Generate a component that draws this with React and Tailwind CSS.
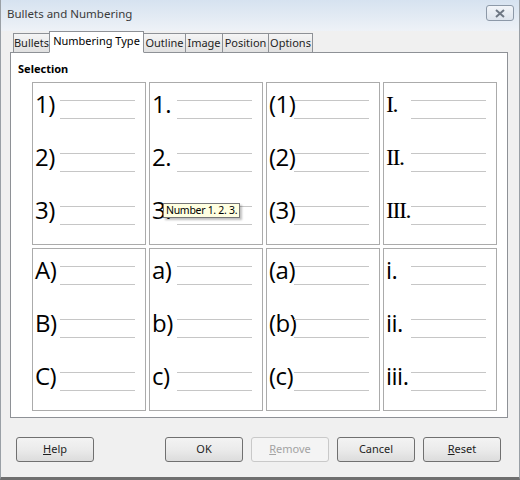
import React from 'react';

const ui = { fontFamily: '"Noto Sans", "Open Sans", Arial, sans-serif' };
const big = { fontFamily: '"Open Sans", "Noto Sans", Arial, sans-serif' };
const serif = { fontFamily: '"Liberation Serif", "DejaVu Serif", serif' };

const tabs = [
  { label: 'Bullets', w: 'w-[37px]' },
  { label: 'Numbering Type', w: 'w-[95px]', active: true },
  { label: 'Outline', w: 'w-[43px]' },
  { label: 'Image', w: 'w-[38px]' },
  { label: 'Position', w: 'w-[47px]' },
  { label: 'Options', w: 'w-[45px]' },
];

const patterns = [
  ['1)', '2)', '3)'],
  ['1.', '2.', '3.'],
  ['(1)', '(2)', '(3)'],
  ['I.', 'II.', 'III.'],
  ['A)', 'B)', 'C)'],
  ['a)', 'b)', 'c)'],
  ['(a)', '(b)', '(c)'],
  ['i.', 'ii.', 'iii.'],
];

function Cell({ items, roman, children }) {
  return (
    <div className="relative w-[114px] h-[163px] bg-white border border-[#ababab] pl-[2px] flex flex-col">
      {items.map((t, i) => (
        <div key={i} className="flex h-[53px] shrink-0">
          <span
            className={
              'w-[25px] shrink-0 whitespace-nowrap text-[24px] leading-[24px] pt-[9px] text-black ' +
              (roman ? 'tracking-[-1.5px]' : 'tracking-[-0.5px]')
            }
            style={roman ? serif : big}
          >
            {t}
          </span>
          <div className="w-[75px] pt-[17px] flex flex-col">
            <div className="h-px bg-[#c6c6c6]" />
            <div className="h-px bg-[#c6c6c6] mt-[17px]" />
          </div>
        </div>
      ))}
      {children}
    </div>
  );
}

function Btn({ children, disabled }) {
  return (
    <button
      className={
        'w-[78px] h-[25px] rounded-[3px] border text-[11px] ' +
        (disabled
          ? 'border-[#c9c9c9] bg-[#f4f4f4] text-[#a3a3a3]'
          : 'border-[#707070] bg-gradient-to-b from-[#f3f3f3] via-[#ebebeb] to-[#dcdcdc] text-[#1e1e1e]')
      }
      style={ui}
    >
      {children}
    </button>
  );
}

export default function App() {
  return (
    <div
      className="w-[520px] h-[480px] bg-[#f0f0f0] border-x border-[#9aa0a6] border-b-[3px] border-b-[#6f6f6f] flex flex-col overflow-hidden"
      style={ui}
    >
      {/* title bar */}
      <div className="h-[31px] shrink-0 bg-gradient-to-b from-[#d6e2f0] to-[#eef2f7] flex items-start justify-between pl-[6px] pr-[5px]">
        <span className="text-[11.5px] text-[#3a3a3a] mt-[5px]">Bullets and Numbering</span>
        <div className="mt-[5px] w-[28px] h-[16px] rounded-[3px] border border-[#8d99a8] bg-gradient-to-b from-[#f2f5f9] to-[#dde4ed] flex items-center justify-center">
          <svg width="12" height="9" viewBox="0 0 12 9">
            <path d="M2 1 L10 8 M10 1 L2 8" stroke="#6e7784" strokeWidth="2" fill="none" />
          </svg>
        </div>
      </div>

      {/* tabs */}
      <div className="flex items-end h-[21px] shrink-0 pl-[12px] relative z-10">
        {tabs.map((t) => (
          <div
            key={t.label}
            className={
              t.w +
              ' -mr-px flex items-center justify-center text-[11px] border border-[#8e9196] whitespace-nowrap ' +
              (t.active
                ? 'h-[22px] -mb-px bg-white border-b-white text-black pb-px'
                : 'h-[19px] border-b-0 bg-gradient-to-b from-[#f5f5f5] to-[#e1e1e1] text-[#1e1e1e]')
            }
          >
            {t.label}
          </div>
        ))}
      </div>

      {/* panel */}
      <div className="ml-[9px] w-[498px] h-[366px] shrink-0 bg-white border border-[#8e9196]">
        <div className="pl-[7px] pt-[8px] text-[11px] font-bold text-black leading-[16px]">Selection</div>
        <div className="ml-[21px] mt-[5px] grid grid-cols-4 gap-[3px] w-[465px]">
          {patterns.map((p, i) => (
            <Cell key={i} items={p} roman={i === 3}>
              {i === 1 && (
                <div className="absolute z-20 left-[13px] top-[120px] h-[15px] px-[2px] bg-[#ffffe1] border border-[#767676] text-[10.5px] leading-[13px] tracking-[-0.3px] text-black whitespace-nowrap shadow-[2px_2px_2px_rgba(0,0,0,0.25)]">
                  Number 1. 2. 3.
                </div>
              )}
            </Cell>
          ))}
        </div>
      </div>

      {/* buttons */}
      <div className="flex items-center mt-[19px] pl-[15px]">
        <Btn>
          <span className="underline">H</span>elp
        </Btn>
        <div className="flex gap-[8px] ml-[71px]">
          <Btn>OK</Btn>
          <Btn disabled>
            <span className="underline">R</span>emove
          </Btn>
          <Btn>Cancel</Btn>
          <Btn>
            <span className="underline">R</span>eset
          </Btn>
        </div>
      </div>
    </div>
  );
}
